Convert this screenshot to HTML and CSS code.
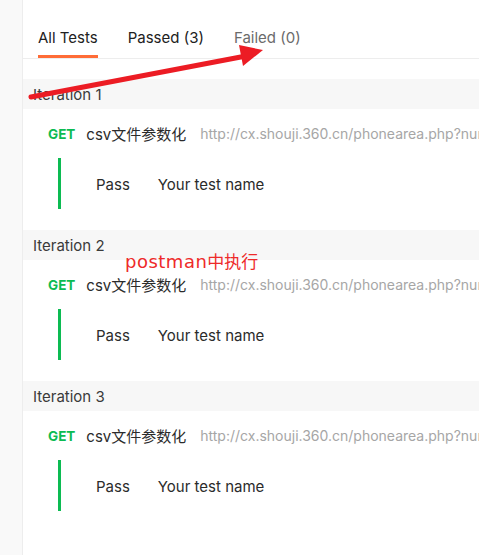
FILE: index.html
```html
<!DOCTYPE html>
<html lang="zh-CN">
<head>
<meta charset="utf-8">
<title>Run results</title>
<link rel="stylesheet" href="styles.css">
</head>
<body>
<div class="app">
  <aside class="sidebar"></aside>
  <main class="main">
    <nav class="tabs">
      <span class="tab active">All Tests</span>
      <span class="tab">Passed (3)</span>
      <span class="tab muted">Failed (0)</span>
    </nav>

    <section class="iteration">
      <div class="iter-head">Iteration 1</div>
      <div class="request">
        <span class="method">GET</span>
        <span class="req-name">csv文件参数化</span>
        <span class="req-url">http://cx.shouji.360.cn/phonearea.php?num</span>
      </div>
      <div class="result">
        <span class="status">Pass</span>
        <span class="test-name">Your test name</span>
      </div>
    </section>

    <section class="iteration">
      <div class="iter-head">Iteration 2</div>
      <div class="request">
        <span class="method">GET</span>
        <span class="req-name">csv文件参数化</span>
        <span class="req-url">http://cx.shouji.360.cn/phonearea.php?num</span>
      </div>
      <div class="result">
        <span class="status">Pass</span>
        <span class="test-name">Your test name</span>
      </div>
    </section>

    <section class="iteration">
      <div class="iter-head">Iteration 3</div>
      <div class="request">
        <span class="method">GET</span>
        <span class="req-name">csv文件参数化</span>
        <span class="req-url">http://cx.shouji.360.cn/phonearea.php?num</span>
      </div>
      <div class="result">
        <span class="status">Pass</span>
        <span class="test-name">Your test name</span>
      </div>
    </section>
  </main>

  <svg class="arrow" width="479" height="120" viewBox="0 0 479 120" aria-hidden="true">
    <line x1="31" y1="97" x2="246" y2="56" stroke="#ec1c24" stroke-width="5" stroke-linecap="round"/>
    <polygon points="239,45 263,50 243,66" fill="#ec1c24"/>
  </svg>
  <div class="note"><span class="note-latin">postman</span>中执行</div>
</div>
</body>
</html>
```

FILE: styles.css
```css
* {
  box-sizing: border-box;
}

html, body {
  margin: 0;
  padding: 0;
  background: #ffffff;
}

body {
  font-family: Inter, "Noto Sans CJK SC", "Liberation Sans", sans-serif;
  font-size: 15px;
  color: #212121;
}

.app {
  position: relative;
  display: flex;
  width: 479px;
  height: 555px;
  overflow: hidden;
}

.sidebar {
  flex: 0 0 23px;
  background: #f9f9f9;
  border-right: 1px solid #ededed;
}

.main {
  flex: 1;
  min-width: 0;
  overflow: hidden;
}

.tabs {
  display: flex;
  align-items: flex-end;
  gap: 30px;
  height: 59px;
  padding-left: 15px;
  border-bottom: 1px solid #ededed;
  margin-bottom: 20px;
}

.tab {
  display: block;
  line-height: 20px;
  padding-bottom: 7px;
  border-bottom: 3px solid transparent;
  color: #212121;
  white-space: nowrap;
}

.tab.active {
  border-bottom-color: #ff6c37;
}

.tab.muted {
  color: #6b6b6b;
}

.iteration {
  margin-bottom: 21px;
}

.iter-head {
  height: 30px;
  line-height: 31px;
  padding-left: 10px;
  background: #f7f7f7;
  color: #3a3a3a;
}

.request {
  display: flex;
  align-items: center;
  height: 49px;
  padding-left: 25px;
  white-space: nowrap;
}

.method {
  font-size: 13.5px;
  font-weight: 700;
  color: #0cbb52;
  margin-right: 11px;
}

.req-name {
  color: #2b2b2b;
  margin-right: 14px;
}

.req-url {
  color: #a6a6a6;
  font-size: 14px;
}

.result {
  display: flex;
  align-items: center;
  height: 51px;
  margin-left: 35px;
  padding-left: 35px;
  gap: 28px;
  border-left: 3px solid #0cbb52;
  color: #2b2b2b;
}

.result .status,
.result .test-name {
  padding-top: 1px;
}

.arrow {
  position: absolute;
  left: 0;
  top: 0;
}

.note {
  position: absolute;
  left: 125px;
  top: 248px;
  font-family: "Noto Sans CJK SC", sans-serif;
  font-size: 17px;
  line-height: 26px;
  color: #ee2a2a;
  white-space: nowrap;
}

.note-latin {
  font-family: "DejaVu Sans", sans-serif;
  font-size: 18px;
  letter-spacing: 0.5px;
}
```
